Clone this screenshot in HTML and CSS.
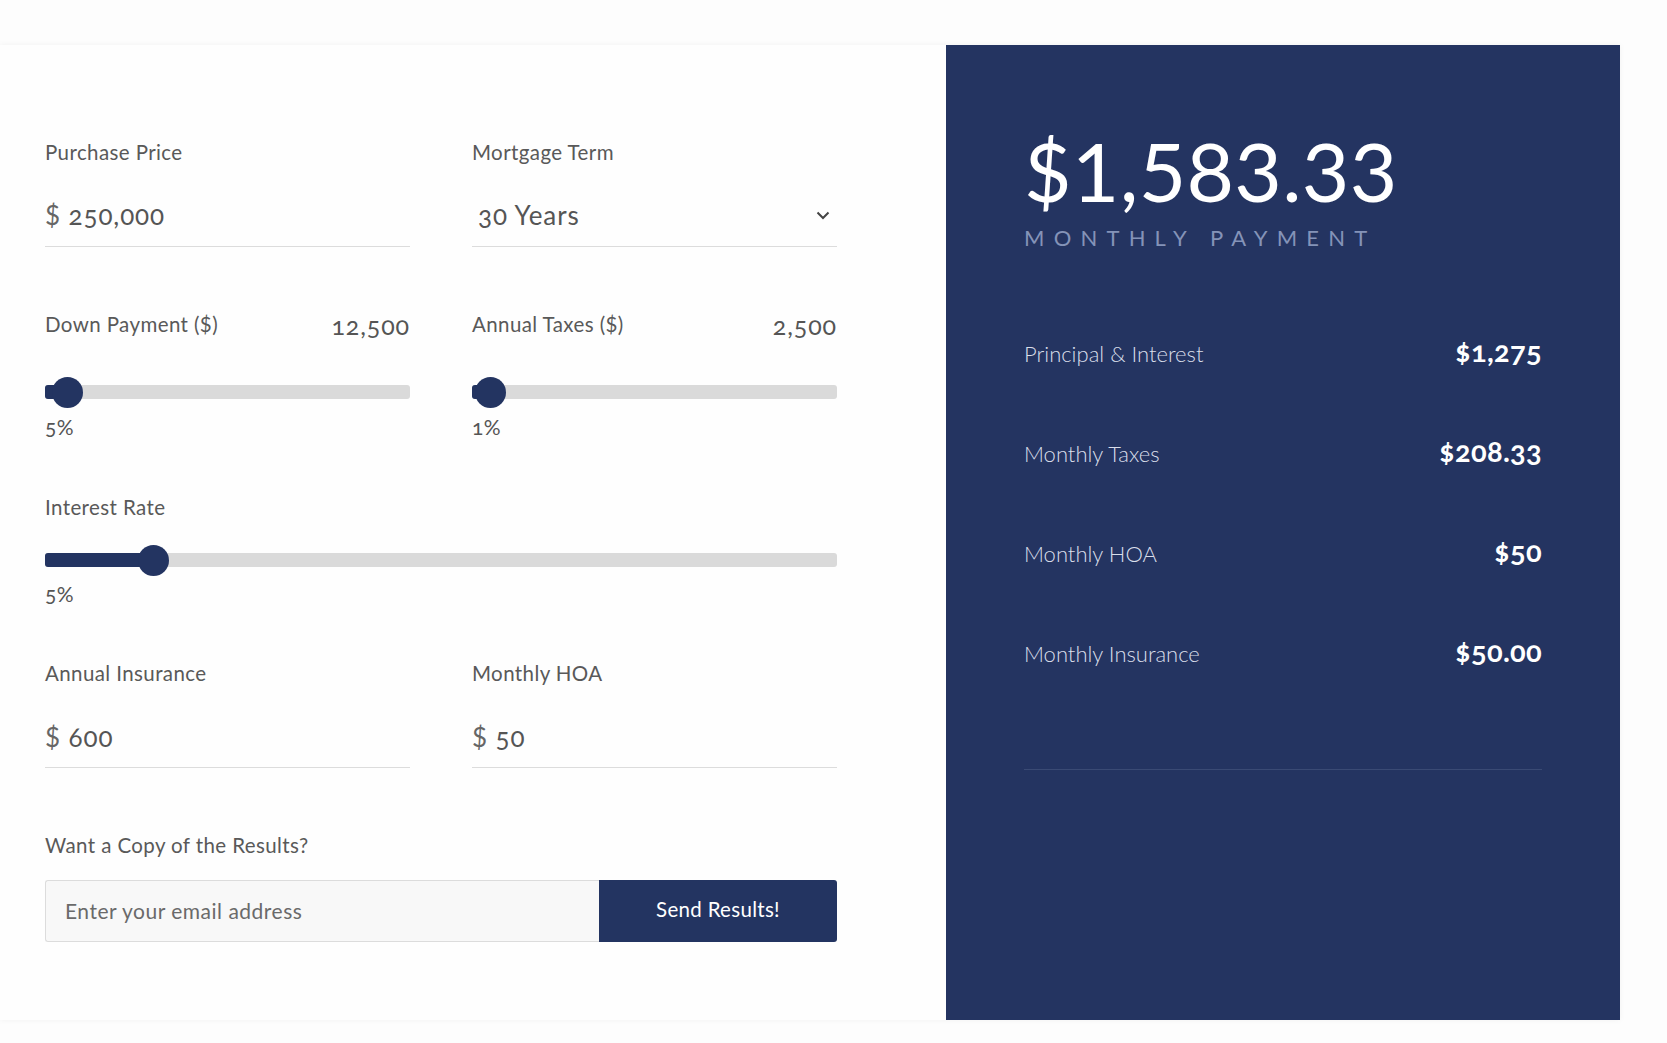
FILE: index.html
```html
<!DOCTYPE html>
<html lang="en">
<head>
<meta charset="utf-8">
<title>Mortgage Calculator</title>
<link rel="stylesheet" href="styles.css">
</head>
<body>
<div class="card">
  <form class="form">
    <div class="grid2">
      <div class="field">
        <div class="lbl">Purchase Price</div>
        <div class="input-line"><span class="cur">$</span> <span class="num">250,000</span></div>
      </div>
      <div class="field">
        <div class="lbl">Mortgage Term</div>
        <div class="input-line select"><span class="sel-text num">30 Years</span>
          <svg class="chev" width="14" height="9" viewBox="0 0 14 9"><polyline points="1.5,1.5 7,7 12.5,1.5" fill="none" stroke="#444" stroke-width="2"/></svg>
        </div>
      </div>
    </div>

    <div class="grid2 sec-sliders">
      <div class="field">
        <div class="head"><span class="lbl">Down Payment ($)</span><span class="hval num">12,500</span></div>
        <div class="slider">
          <div class="track"><div class="fill" style="width:22px"></div></div>
          <div class="thumb" style="left:7px"></div>
        </div>
        <div class="pct num">5%</div>
      </div>
      <div class="field">
        <div class="head"><span class="lbl">Annual Taxes ($)</span><span class="hval num">2,500</span></div>
        <div class="slider">
          <div class="track"><div class="fill" style="width:18px"></div></div>
          <div class="thumb" style="left:3px"></div>
        </div>
        <div class="pct num">1%</div>
      </div>
    </div>

    <div class="field sec-rate">
      <div class="lbl">Interest Rate</div>
      <div class="slider slider-rate">
        <div class="track"><div class="fill" style="width:109px"></div></div>
        <div class="thumb" style="left:93px"></div>
      </div>
      <div class="pct pct-rate num">5%</div>
    </div>

    <div class="grid2 sec-ins">
      <div class="field">
        <div class="lbl">Annual Insurance</div>
        <div class="input-line input-line2"><span class="cur">$</span> <span class="num">600</span></div>
      </div>
      <div class="field">
        <div class="lbl">Monthly HOA</div>
        <div class="input-line input-line2"><span class="cur">$</span> <span class="num">50</span></div>
      </div>
    </div>

    <div class="sec-copy">
      <div class="lbl">Want a Copy of the Results?</div>
      <div class="email-group">
        <div class="email">Enter your email address</div>
        <div class="send">Send Results!</div>
      </div>
    </div>
  </form>

  <aside class="panel">
    <div class="total">$1,583.33</div>
    <div class="total-lbl">MONTHLY PAYMENT</div>
    <div class="rows">
      <div class="row"><span class="rlbl">Principal &amp; Interest</span><span class="rval">$1,275</span></div>
      <div class="row"><span class="rlbl">Monthly Taxes</span><span class="rval">$208.33</span></div>
      <div class="row"><span class="rlbl">Monthly HOA</span><span class="rval">$50</span></div>
      <div class="row"><span class="rlbl">Monthly Insurance</span><span class="rval">$50.00</span></div>
    </div>
    <div class="divider"></div>
  </aside>
</div>
</body>
</html>
```

FILE: styles.css
```css
* { box-sizing: border-box; }
html, body { margin: 0; padding: 0; }
body {
  background: #fdfdfd;
  font-family: "Lato", "Liberation Sans", sans-serif;
  color: #555;
  width: 1667px;
  height: 1043px;
  overflow: hidden;
}
.card {
  margin-top: 45px;
  width: 1620px;
  height: 975px;
  background: #fefefe;
  box-shadow: 0 0 6px rgba(0, 0, 0, 0.05);
  display: flex;
}
.form {
  width: 837px;
  padding: 95px 0 0 45px;
}
.grid2 {
  display: grid;
  grid-template-columns: 365px 365px;
  column-gap: 62px;
}
.lbl {
  font-size: 20.5px;
  line-height: 24px;
  color: #595959;
  letter-spacing: 0.4px;
}
.num { font-variant-numeric: oldstyle-nums; }
.input-line {
  margin-top: 31px;
  height: 52px;
  line-height: 40px;
  padding-bottom: 11px;
  font-size: 26px;
  color: #555;
  border-bottom: 1px solid #dcdcdc;
  letter-spacing: 0.9px;
}
.input-line2 { margin-top: 32px; height: 51px; padding-bottom: 10px; }
.cur { color: #666; }
.select {
  display: flex;
  justify-content: space-between;
  align-items: center;
  padding-left: 6px;
  padding-right: 7px;
}

.sec-sliders { margin-top: 63px; }
.head {
  display: flex;
  justify-content: space-between;
  align-items: baseline;
  height: 24px;
  line-height: 24px;
}
.head .lbl { display: inline-block; }
.hval {
  font-size: 25px;
  color: #555;
  letter-spacing: 0.9px;
  position: relative;
  top: 3px;
}
.slider {
  position: relative;
  margin-top: 43px;
  height: 30px;
}
.track {
  position: absolute;
  left: 0;
  right: 0;
  top: 8px;
  height: 14px;
  background: #dadada;
  border-radius: 3px;
  overflow: hidden;
}
.fill {
  height: 100%;
  background: #233461;
}
.thumb {
  position: absolute;
  top: 0;
  width: 31px;
  height: 31px;
  border-radius: 50%;
  background: #233461;
}
.pct {
  margin-top: 8px;
  font-size: 21px;
  line-height: 24px;
  color: #555;
  letter-spacing: 0.3px;
}
.sec-rate { margin-top: 56px; }
.slider-rate { margin-top: 26px; }
.pct-rate { margin-top: 7px; }

.sec-ins { margin-top: 55px; }

.sec-copy { margin-top: 65px; }
.email-group {
  margin-top: 23px;
  display: flex;
  height: 62px;
}
.email {
  width: 554px;
  background: #f8f8f8;
  border: 1px solid #dcdcdc;
  border-right: none;
  border-radius: 3px 0 0 3px;
  padding-left: 19px;
  line-height: 60px;
  font-size: 21px;
  color: #6a6a6a;
  letter-spacing: 0.5px;
}
.send {
  width: 238px;
  background: #233461;
  border-radius: 0 3px 3px 0;
  color: #fff;
  text-align: center;
  line-height: 58px;
  font-size: 20.5px;
  letter-spacing: 0.3px;
}

.panel {
  margin-left: auto;
  width: 674px;
  height: 975px;
  background: #243461;
  padding: 85px 78px 0 78px;
}
.total {
  font-size: 82px;
  line-height: 80px;
  color: #fff;
  font-weight: 400;
  letter-spacing: 0.3px;
}
.total-lbl {
  margin-top: 15px;
  font-size: 22px;
  line-height: 26px;
  font-weight: 400;
  color: #8493b8;
  letter-spacing: 9.2px;
}
.rows {
  margin-top: 85px;
  display: flex;
  flex-direction: column;
  row-gap: 70px;
}
.row {
  display: flex;
  justify-content: space-between;
  align-items: baseline;
  height: 30px;
  line-height: 30px;
}
.rlbl {
  font-size: 22px;
  font-weight: 300;
  color: #d9deea;
}
.rval {
  font-size: 29px;
  font-weight: 700;
  color: #fff;
  letter-spacing: 0.3px;
  font-variant-numeric: oldstyle-nums;
}
.divider {
  margin-top: 103px;
  height: 1px;
  background: #3a4a74;
}
```
